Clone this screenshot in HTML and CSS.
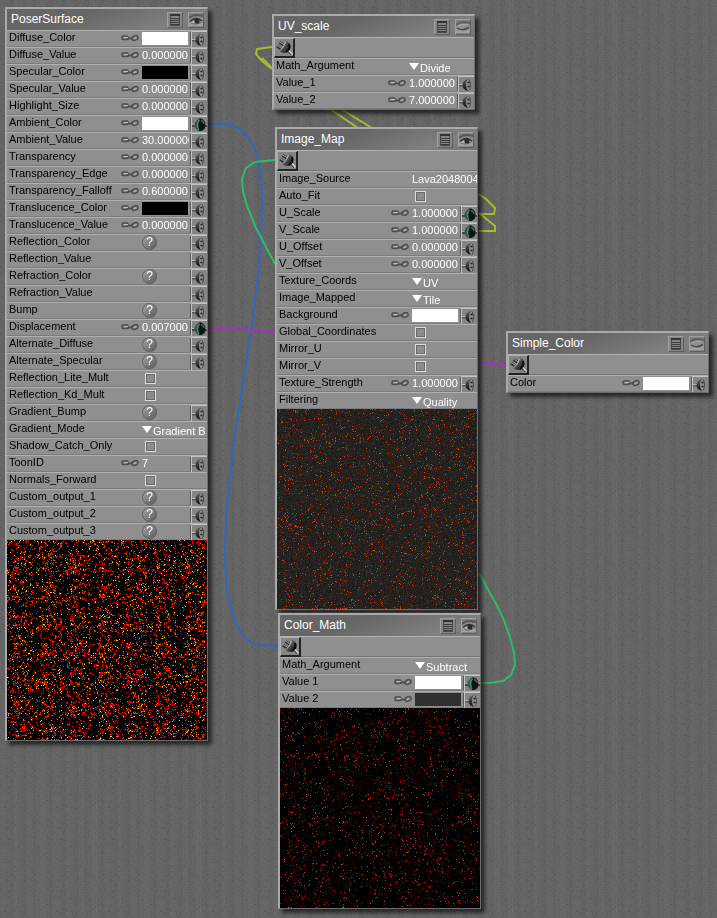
FILE: index.html
```html
<!DOCTYPE html>
<html lang="en">
<head>
<meta charset="utf-8">
<meta name="viewport" content="width=device-width, initial-scale=1">
<title>Material nodes</title>
<link rel="stylesheet" href="styles.css">
</head>
<body>
<svg class="defs" aria-hidden="true">
  <defs>
    <linearGradient id="dome" x1="0" y1="0" x2="0" y2="1"><stop offset="0" stop-color="#666"/><stop offset="1" stop-color="#0c0c0c"/></linearGradient>
    <linearGradient id="barrel" x1="0" y1="0" x2="1" y2="1"><stop offset="0" stop-color="#b4b4b4"/><stop offset=".5" stop-color="#4a4a4a"/><stop offset="1" stop-color="#0a0a0a"/></linearGradient>
    <linearGradient id="skin" x1="0" y1="0" x2="0" y2="1"><stop offset="0" stop-color="#7c7c7c"/><stop offset="1" stop-color="#a2a2a2"/></linearGradient>
  </defs>
  <symbol id="key" viewBox="0 0 18 8">
    <g fill="#8a8a8a" stroke="#4e4e4e" stroke-width="1.5"><rect x="1" y="2" width="6" height="3.500" rx="1"/><ellipse cx="14" cy="4" rx="3.200" ry="2.200" transform="rotate(-20 14 4)"/></g>
    <path d="M6 4.500h6" stroke="#4e4e4e" stroke-width="2"/>
    <path d="M3 3.500h4M13 4.700l2-1" stroke="#bdbdbd" fill="none"/>
  </symbol>
  <symbol id="socket" viewBox="0 0 15 15">
    <path d="M0 8.500h4" stroke="#5a5a5a" stroke-width="2"/><path d="M0 7.500h4" stroke="#b4b4b4"/>
    <path d="M9 1.500Q3.500 3.500 3.500 8T9 14z" fill="url(#dome)"/>
    <path d="M8.500 2.500h1.500q1.500 1.500 1.500 5.500t-1.500 5.500h-1.500q-1.500-2-1.500-5.500t1.500-5.500z" fill="#8c8c8c"/>
    <path d="M10 2.500q1.500 1.500 1.500 5.500t-1.500 5.500" fill="none" stroke="#484848"/>
    <path d="M8.500 5.500h2M8.500 9.500h2" stroke="#1c1c1c" stroke-width="1.500"/>
  </symbol>
  <symbol id="linked" viewBox="0 0 15 15">
    <path d="M0 8.500h15" stroke="#454545" stroke-width="3"/><path d="M0 7.500h15" stroke="#a8a8a8"/>
    <path d="M8 1.500C4 3 2.500 5.500 2.500 8s1.500 5 5.500 6z" fill="#4a4a4a"/>
    <path d="M7 1.500h2c3 1 4.500 3.500 4.500 6.500s-1.500 5.500-4.500 6H7q-2-2-2-6t2-6.500z" fill="#131313"/>
    <path d="M7.500 2.500Q5.500 4.500 5.500 8t1.500 5" fill="none" stroke="#1f9f82" stroke-width="1.500"/>
    <path d="M9 3.500q2.500.5 3 3.500" stroke="#5a5a5a" fill="none" stroke-width="1.500"/>
  </symbol>
  <symbol id="plug" viewBox="0 0 18 17">
    <path d="M4.500 3.500l5 3M2 7l5 3.500" stroke="#303030" stroke-width="3"/>
    <path d="M4.500 3l5 3M2 6.500l5 3" stroke="#a2a2a2" stroke-width="1"/>
    <path d="M11 1.500Q15.500 3.500 15.500 8Q15 13.500 9.500 14Q6 14 4.500 12Q9 9 11 1.500z" fill="url(#barrel)"/>
    <path d="M14 5q2 5-3 8" stroke="#090909" stroke-width="2" fill="none"/>
    <path d="M10.500 3Q9 8.500 5 11.500" stroke="#bcbcbc" fill="none"/>
    <path d="M14 11.500l3.500 4" stroke="#d0d0d0" stroke-width="1.500"/><path d="M13 12.500l3 3.500" stroke="#3a3a3a"/>
  </symbol>
  <symbol id="sheet" viewBox="0 0 14 14">
    <path d="M2.500 1.500h9v11h-9z" fill="#858585" stroke="#484848"/><path d="M2 2h10" stroke="#333" stroke-width="2"/>
    <path d="M3 5.500h8M3 7.500h8M3 9.500h8M3 11.500h8" stroke="#3c3c3c"/>
  </symbol>
  <symbol id="eye" viewBox="0 0 14 14">
    <path d="M0 1h14v12H0z" fill="url(#skin)"/>
    <path d="M0 5q4-4.500 14-2" fill="none" stroke="#585858" stroke-width="2"/>
    <path d="M1 9q6-6 12-1q-6 5-12 1z" fill="#b5b5b5"/>
    <path d="M1 8.500q6-5.500 12-.5" fill="none" stroke="#333" stroke-width="1.500"/>
    <path d="M2 10q5 2.500 11-1.500" fill="none" stroke="#686868"/>
    <circle cx="8" cy="8" r="2.600" fill="#2a2a2a"/>
  </symbol>
  <symbol id="lid" viewBox="0 0 14 14">
    <path d="M0 1h14v12H0z" fill="url(#skin)"/>
    <path d="M0 5q4-4.500 14-2" fill="none" stroke="#606060" stroke-width="2"/>
    <path d="M2 6q5-2.500 10-1" fill="none" stroke="#b0b0b0"/>
    <path d="M1 8q5 3.500 12-.5" fill="none" stroke="#484848" stroke-width="1.500"/>
  </symbol>
</svg>

<main class="board">
  <canvas class="fabric" aria-hidden="true"></canvas>

  <svg class="wires" aria-hidden="true">
    <path class="blue" d="M207 124H224C250 125 262 155 262 200C262 320 225 440 225 555C225 615 242 643 258 645L278 646"/>
    <path class="green" d="M275 160L255 162L246 168L242 179L243 191L247 206L256 228L275 264"/>
    <path class="green" d="M479 573L495 602Q508 625 514 653L515 665L511 675L503 681L489 683H480"/>
    <path class="olive" d="M272 47L257 49L256 54L262 61L272 69M262 58L272 68"/>
    <path class="olive" d="M330 109L358 128M341 109L372 128M479 194L486 199L495 208L494 214L479 214M479 213L495 226V231L479 231"/>
    <path class="magenta" d="M207 328H228L276 332M478 363L506 364"/>
  </svg>

  <section class="node poser" aria-label="PoserSurface">
    <header class="head"><h2>PoserSurface</h2><button aria-label="Node menu"><svg><use href="#sheet"/></svg></button><button aria-label="Toggle preview"><svg><use href="#eye"/></svg></button></header>
    <div class="row"><label for="a1">Diffuse_Color</label><svg class="key"><use href="#key"/></svg><button class="swatch white" id="a1"></button><button class="port" aria-label="Input"><svg><use href="#socket"/></svg></button></div>
    <div class="row"><label for="a2">Diffuse_Value</label><svg class="key"><use href="#key"/></svg><input class="num" id="a2" value="0.000000"><button class="port" aria-label="Input"><svg><use href="#socket"/></svg></button></div>
    <div class="row"><label for="a3">Specular_Color</label><svg class="key"><use href="#key"/></svg><button class="swatch black" id="a3"></button><button class="port" aria-label="Input"><svg><use href="#socket"/></svg></button></div>
    <div class="row"><label for="a4">Specular_Value</label><svg class="key"><use href="#key"/></svg><input class="num" id="a4" value="0.000000"><button class="port" aria-label="Input"><svg><use href="#socket"/></svg></button></div>
    <div class="row"><label for="a5">Highlight_Size</label><svg class="key"><use href="#key"/></svg><input class="num" id="a5" value="0.000000"><button class="port" aria-label="Input"><svg><use href="#socket"/></svg></button></div>
    <div class="row"><label for="a6">Ambient_Color</label><svg class="key"><use href="#key"/></svg><button class="swatch white" id="a6"></button><button class="port" aria-label="Input, connected"><svg><use href="#linked"/></svg></button></div>
    <div class="row"><label for="a7">Ambient_Value</label><svg class="key"><use href="#key"/></svg><input class="num" id="a7" value="30.000000"><button class="port" aria-label="Input"><svg><use href="#socket"/></svg></button></div>
    <div class="row"><label for="a8">Transparency</label><svg class="key"><use href="#key"/></svg><input class="num" id="a8" value="0.000000"><button class="port" aria-label="Input"><svg><use href="#socket"/></svg></button></div>
    <div class="row"><label for="a9">Transparency_Edge</label><svg class="key"><use href="#key"/></svg><input class="num" id="a9" value="0.000000"><button class="port" aria-label="Input"><svg><use href="#socket"/></svg></button></div>
    <div class="row"><label for="a10">Transparency_Falloff</label><svg class="key"><use href="#key"/></svg><input class="num" id="a10" value="0.600000"><button class="port" aria-label="Input"><svg><use href="#socket"/></svg></button></div>
    <div class="row"><label for="a11">Translucence_Color</label><svg class="key"><use href="#key"/></svg><button class="swatch black" id="a11"></button><button class="port" aria-label="Input"><svg><use href="#socket"/></svg></button></div>
    <div class="row"><label for="a12">Translucence_Value</label><svg class="key"><use href="#key"/></svg><input class="num" id="a12" value="0.000000"><button class="port" aria-label="Input"><svg><use href="#socket"/></svg></button></div>
    <div class="row"><label for="a13">Reflection_Color</label><button class="ask" id="a13">?</button><button class="port" aria-label="Input"><svg><use href="#socket"/></svg></button></div>
    <div class="row"><span class="name">Reflection_Value</span><button class="port" aria-label="Input"><svg><use href="#socket"/></svg></button></div>
    <div class="row"><label for="a15">Refraction_Color</label><button class="ask" id="a15">?</button><button class="port" aria-label="Input"><svg><use href="#socket"/></svg></button></div>
    <div class="row"><span class="name">Refraction_Value</span><button class="port" aria-label="Input"><svg><use href="#socket"/></svg></button></div>
    <div class="row"><label for="a17">Bump</label><button class="ask" id="a17">?</button><button class="port" aria-label="Input"><svg><use href="#socket"/></svg></button></div>
    <div class="row"><label for="a18">Displacement</label><svg class="key"><use href="#key"/></svg><input class="num" id="a18" value="0.007000"><button class="port" aria-label="Input, connected"><svg><use href="#linked"/></svg></button></div>
    <div class="row"><label for="a19">Alternate_Diffuse</label><button class="ask" id="a19">?</button><button class="port" aria-label="Input"><svg><use href="#socket"/></svg></button></div>
    <div class="row"><label for="a20">Alternate_Specular</label><button class="ask" id="a20">?</button><button class="port" aria-label="Input"><svg><use href="#socket"/></svg></button></div>
    <div class="row"><label for="a21">Reflection_Lite_Mult</label><input type="checkbox" id="a21"></div>
    <div class="row"><label for="a22">Reflection_Kd_Mult</label><input type="checkbox" id="a22"></div>
    <div class="row"><label for="a23">Gradient_Bump</label><button class="ask" id="a23">?</button><button class="port" aria-label="Input"><svg><use href="#socket"/></svg></button></div>
    <div class="row"><label for="a24">Gradient_Mode</label><span class="pick"><select id="a24"><option>Gradient B</option></select></span></div>
    <div class="row"><label for="a25">Shadow_Catch_Only</label><input type="checkbox" id="a25"></div>
    <div class="row"><label for="a26">ToonID</label><svg class="key"><use href="#key"/></svg><input class="num" id="a26" value="7"><button class="port" aria-label="Input"><svg><use href="#socket"/></svg></button></div>
    <div class="row"><label for="a27">Normals_Forward</label><input type="checkbox" id="a27"></div>
    <div class="row"><label for="a28">Custom_output_1</label><button class="ask" id="a28">?</button><button class="port" aria-label="Input"><svg><use href="#socket"/></svg></button></div>
    <div class="row"><label for="a29">Custom_output_2</label><button class="ask" id="a29">?</button><button class="port" aria-label="Input"><svg><use href="#socket"/></svg></button></div>
    <div class="row"><label for="a30">Custom_output_3</label><button class="ask" id="a30">?</button><button class="port" aria-label="Input"><svg><use href="#socket"/></svg></button></div>
    <canvas class="preview" data-kind="surface" width="200" height="200"></canvas>
  </section>

  <section class="node uvscale" aria-label="UV_scale">
    <header class="head"><h2>UV_scale</h2><button aria-label="Node menu"><svg><use href="#sheet"/></svg></button><button aria-label="Toggle preview"><svg><use href="#lid"/></svg></button></header>
    <div class="outlet"><button aria-label="Output"><svg><use href="#plug"/></svg></button></div>
    <div class="row"><label for="b1">Math_Argument</label><span class="pick"><select id="b1"><option>Divide</option></select></span></div>
    <div class="row"><label for="b2">Value_1</label><svg class="key"><use href="#key"/></svg><input class="num" id="b2" value="1.000000"><button class="port" aria-label="Input"><svg><use href="#socket"/></svg></button></div>
    <div class="row"><label for="b3">Value_2</label><svg class="key"><use href="#key"/></svg><input class="num" id="b3" value="7.000000"><button class="port" aria-label="Input"><svg><use href="#socket"/></svg></button></div>
  </section>

  <section class="node imagemap" aria-label="Image_Map">
    <header class="head"><h2>Image_Map</h2><button aria-label="Node menu"><svg><use href="#sheet"/></svg></button><button aria-label="Toggle preview"><svg><use href="#eye"/></svg></button></header>
    <div class="outlet"><button aria-label="Output"><svg><use href="#plug"/></svg></button></div>
    <div class="row"><label for="c1">Image_Source</label><input class="num file" id="c1" value="Lava2048004"></div>
    <div class="row"><label for="c2">Auto_Fit</label><input type="checkbox" id="c2"></div>
    <div class="row"><label for="c3">U_Scale</label><svg class="key"><use href="#key"/></svg><input class="num" id="c3" value="1.000000"><button class="port" aria-label="Input, connected"><svg><use href="#linked"/></svg></button></div>
    <div class="row"><label for="c4">V_Scale</label><svg class="key"><use href="#key"/></svg><input class="num" id="c4" value="1.000000"><button class="port" aria-label="Input, connected"><svg><use href="#linked"/></svg></button></div>
    <div class="row"><label for="c5">U_Offset</label><svg class="key"><use href="#key"/></svg><input class="num" id="c5" value="0.000000"><button class="port" aria-label="Input"><svg><use href="#socket"/></svg></button></div>
    <div class="row"><label for="c6">V_Offset</label><svg class="key"><use href="#key"/></svg><input class="num" id="c6" value="0.000000"><button class="port" aria-label="Input"><svg><use href="#socket"/></svg></button></div>
    <div class="row"><label for="c7">Texture_Coords</label><span class="pick"><select id="c7"><option>UV</option></select></span></div>
    <div class="row"><label for="c8">Image_Mapped</label><span class="pick"><select id="c8"><option>Tile</option></select></span></div>
    <div class="row"><label for="c9">Background</label><svg class="key"><use href="#key"/></svg><button class="swatch white" id="c9"></button><button class="port" aria-label="Input"><svg><use href="#socket"/></svg></button></div>
    <div class="row"><label for="c10">Global_Coordinates</label><input type="checkbox" id="c10"></div>
    <div class="row"><label for="c11">Mirror_U</label><input type="checkbox" id="c11"></div>
    <div class="row"><label for="c12">Mirror_V</label><input type="checkbox" id="c12"></div>
    <div class="row"><label for="c13">Texture_Strength</label><svg class="key"><use href="#key"/></svg><input class="num" id="c13" value="1.000000"><button class="port" aria-label="Input"><svg><use href="#socket"/></svg></button></div>
    <div class="row"><label for="c14">Filtering</label><span class="pick"><select id="c14"><option>Quality</option></select></span></div>
    <canvas class="preview" data-kind="lava" width="200" height="200"></canvas>
  </section>

  <section class="node colormath" aria-label="Color_Math">
    <header class="head"><h2>Color_Math</h2><button aria-label="Node menu"><svg><use href="#sheet"/></svg></button><button aria-label="Toggle preview"><svg><use href="#eye"/></svg></button></header>
    <div class="outlet"><button aria-label="Output"><svg><use href="#plug"/></svg></button></div>
    <div class="row"><label for="d1">Math_Argument</label><span class="pick"><select id="d1"><option>Subtract</option></select></span></div>
    <div class="row"><label for="d2">Value 1</label><svg class="key"><use href="#key"/></svg><button class="swatch white" id="d2"></button><button class="port" aria-label="Input, connected"><svg><use href="#linked"/></svg></button></div>
    <div class="row"><label for="d3">Value 2</label><svg class="key"><use href="#key"/></svg><button class="swatch dark" id="d3"></button><button class="port" aria-label="Input"><svg><use href="#socket"/></svg></button></div>
    <canvas class="preview" data-kind="embers" width="200" height="200"></canvas>
  </section>

  <section class="node simplecolor" aria-label="Simple_Color">
    <header class="head"><h2>Simple_Color</h2><button aria-label="Node menu"><svg><use href="#sheet"/></svg></button><button aria-label="Toggle preview"><svg><use href="#lid"/></svg></button></header>
    <div class="outlet"><button aria-label="Output"><svg><use href="#plug"/></svg></button></div>
    <div class="row"><label for="e1">Color</label><svg class="key"><use href="#key"/></svg><button class="swatch white" id="e1"></button><button class="port" aria-label="Input"><svg><use href="#socket"/></svg></button></div>
  </section>
</main>
<script src="script.js"></script>
</body>
</html>
```
FILE: styles.css
```css
* { box-sizing: border-box; }

body {
  margin: 0;
  background: #646464;
  font-family: "Liberation Sans", Arial, sans-serif;
  font-size: 11px;
  color: #000;
}

button, input, select { font: inherit; margin: 0; padding: 0; border: 0; border-radius: 0; }
svg { display: block; }
.defs { position: absolute; width: 0; height: 0; }

.board { position: relative; min-height: 100vh; overflow: hidden; }
.fabric, .wires { position: absolute; inset: 0; width: 100%; height: 100%; }

.wires { fill: none; stroke-width: 2; }
.blue { stroke: #2f68bd; }
.green { stroke: #2cbb68; }
.olive { stroke: #a3bd2e; }
.magenta { stroke: #a62fc0; }

/* nodes sit freely on the board */
.node {
  position: absolute;
  width: 203px;
  border: solid #aaa;
  border-width: 2px 1px 1px 2px;
  border-right-color: #6c6c6c;
  border-bottom-color: #6c6c6c;
  background: #8f8f8f;
  box-shadow: 4px 4px 4px rgba(0, 0, 0, .6);
}
.poser { left: 5px; top: 7px; }
.uvscale { left: 272px; top: 14px; }
.imagemap { left: 275px; top: 127px; }
.colormath { left: 278px; top: 613px; }
.simplecolor { left: 506px; top: 331px; }

.head {
  display: flex;
  align-items: center;
  gap: 5px;
  height: 21px;
  padding: 0 3px 0 4px;
  background: linear-gradient(160deg, #666 35%, #808080 80%, #747474);
}
.head h2 {
  flex: 1;
  margin: 0;
  font-size: 12px;
  font-weight: normal;
  line-height: 19px;
  color: #fff;
}
.head button {
  width: 16px;
  height: 16px;
  background: #858585;
  border: 1px solid #a0a0a0;
  border-right-color: #5f5f5f;
  border-bottom-color: #5f5f5f;
}
.head svg { width: 14px; height: 14px; }

.outlet { height: 21px; border-top: 1px solid #b2b2b2; border-bottom: 1px solid #747474; }
.outlet button {
  width: 21px;
  height: 20px;
  background: #858585;
  border: 1px solid #b0b0b0;
  border-right: 2px solid #222;
  border-bottom: 2px solid #222;
}
.outlet svg { width: 18px; height: 17px; }

.row {
  display: grid;
  grid-template-columns: minmax(0, 1fr) 21px 49px 16px;
  height: 17px;
  padding-left: 2px;
  border-top: 1px solid #b0b0b0;
  border-bottom: 1px solid #7c7c7c;
}
.row > * { grid-row: 1; }
.row label, .name { grid-column: 1; line-height: 12px; white-space: nowrap; }
.key { grid-column: 2; width: 18px; height: 8px; margin-top: 3px; }

.num {
  grid-column: 3;
  width: 47px;
  height: 14px;
  line-height: 14px;
  background: none;
  color: #fff;
}
.file { grid-column: 3 / 5; width: 100%; }
.swatch { grid-column: 3; width: 46px; height: 13px; margin-top: 1px; }
.white { background: #fff; }
.black { background: #000; }
.dark { background: #303030; }

.port {
  grid-column: 4;
  height: 16px;
  background: #858585;
  border-left: 1px solid #c4c4c4;
  border-top: 1px solid #c4c4c4;
  box-shadow: -2px 0 0 -1px #5a5a5a;
}
.port svg { width: 15px; height: 15px; }

.ask {
  grid-column: 3;
  width: 15px;
  height: 15px;
  border-radius: 8px;
  background: linear-gradient(135deg, #aaa, #555);
  box-shadow: inset 0 0 0 1px #666;
  color: #fff;
  font-size: 12px;
  line-height: 15px;
}

input[type="checkbox"] {
  grid-column: 3;
  appearance: none;
  width: 11px;
  height: 11px;
  margin: 2px 0 0 3px;
  border: 1px solid #dcdcdc;
  background: #8c8c8c;
  box-shadow: inset 0 0 0 1px #6a6a6a;
}

.pick { grid-column: 3 / 5; display: flex; gap: 1px; }
.pick::before {
  content: "";
  width: 10px;
  height: 7px;
  margin-top: 4px;
  background: #fff;
  clip-path: polygon(0 0, 100% 0, 50% 100%);
}
.pick select {
  flex: 1;
  height: 15px;
  margin-top: 2px;
  line-height: 15px;
  appearance: none;
  background: none;
  color: #fff;
}

.preview { display: block; width: 100%; height: auto; }
```
FILE: script.js
```js
// Small seeded generator, so that the textures are the same on every load.
function generator(seed) {
  return function () {
    seed = (seed + 0x6D2B79F5) | 0;
    let t = Math.imul(seed ^ (seed >>> 15), 1 | seed);
    t = (t + Math.imul(t ^ (t >>> 7), 61 | t)) ^ t;
    return ((t ^ (t >>> 14)) >>> 0) / 4294967296;
  };
}

function paint(canvas, shade) {
  const context = canvas.getContext('2d');
  const image = context.createImageData(canvas.width, canvas.height);
  let i = 0;
  for (let y = 0; y < canvas.height; y++) {
    for (let x = 0; x < canvas.width; x++) {
      const c = shade(x, y);
      image.data[i++] = c[0];
      image.data[i++] = c[1];
      image.data[i++] = c[2];
      image.data[i++] = 255;
    }
  }
  context.putImageData(image, 0, 0);
}

// Crack density of one lava tile, on a wrapping grid.
const GRID = 10;
const tileRandom = generator(41);
const density = Array.from({ length: GRID * GRID }, () => 0.15 + 2.2 * Math.pow(tileRandom(), 1.8));

// The tile is repeated seven times across a preview.
function crack(x, y) {
  const u = (x * 7 / 200) % 1;
  const v = (y * 7 / 200) % 1;
  const base = density[Math.floor(v * GRID) * GRID + Math.floor(u * GRID)];
  return v > 0.93 && u > 0.15 && u < 0.45 ? base + 1.2 : base;
}

const kinds = {
  surface: { seed: 5, amount: 0.26, colors: [[255, 12, 0], [240, 0, 0], [255, 30, 0], [225, 0, 0], [190, 0, 0], [120, 0, 0], [90, 10, 0], [60, 8, 0], [225, 110, 20], [255, 200, 30], [150, 60, 0], [255, 60, 0]] },
  lava: { seed: 17, amount: 0.1, colors: [[210, 45, 12], [150, 35, 14], [110, 32, 18], [80, 32, 22], [215, 65, 18], [85, 38, 24]] },
  embers: { seed: 29, amount: 0.12, colors: [[170, 0, 0], [105, 0, 0], [65, 5, 0], [45, 12, 0], [205, 25, 0], [55, 26, 6], [40, 0, 0], [85, 0, 0], [170, 80, 18]] }
};

document.querySelectorAll('.preview').forEach(canvas => {
  const kind = kinds[canvas.dataset.kind];
  const random = generator(kind.seed);
  paint(canvas, (x, y) => {
    if (random() < kind.amount * crack(x, y)) {
      return kind.colors[Math.floor(random() * kind.colors.length)];
    }
    if (canvas.dataset.kind === 'lava') {
      const n = random() * 18;
      return [27 + n, 25 + n, 21 + n];
    }
    return [0, 0, 0];
  });
});

// Board fabric: faint vertical ribs with a grain, in a 52px repeat.
const fabric = document.querySelector('.fabric');
fabric.width = fabric.clientWidth;
fabric.height = fabric.clientHeight;
const grainRandom = generator(3);
const grain = Array.from({ length: 52 * 52 }, () => grainRandom());
const ribs = Array.from({ length: 52 }, () => (grainRandom() - 0.5) * 4);
paint(fabric, (x, y) => {
  const g = grain[(y % 52) * 52 + (x % 52)];
  const rib = ribs[x % 52] + 2 * Math.sin(x * Math.PI * 2 / 13);
  const level = 101 + rib + (g - 0.5) * 5 - (g < 0.08 ? 8 : 0);
  return [level, level, level];
});
```
